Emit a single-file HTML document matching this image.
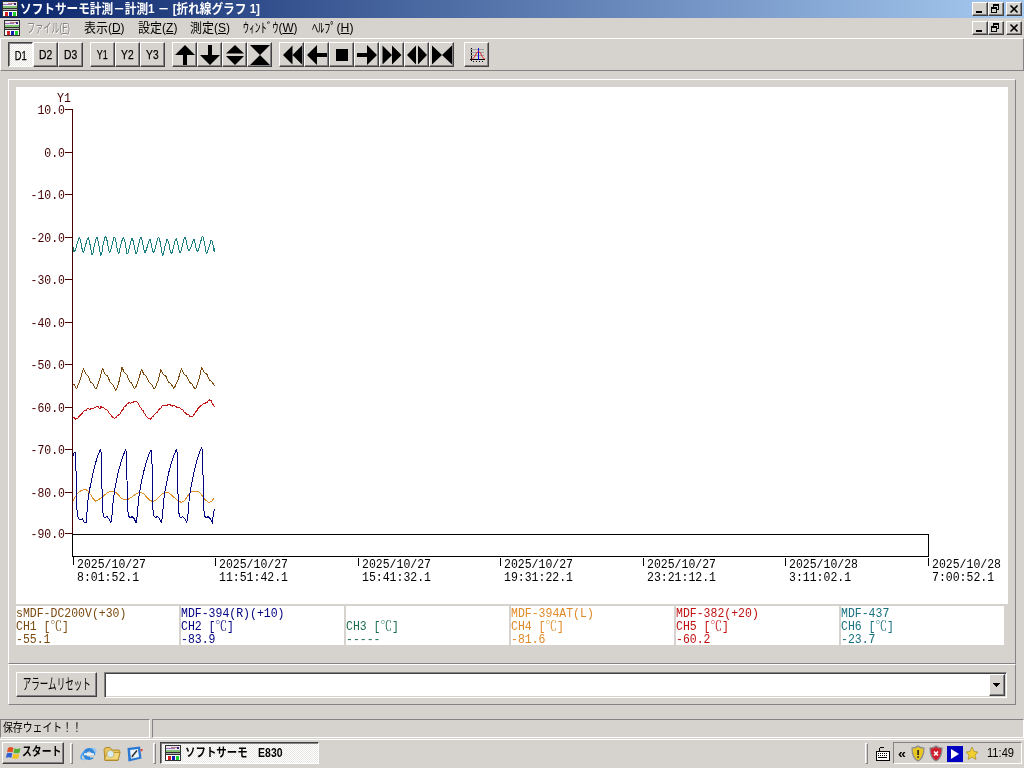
<!DOCTYPE html>
<html lang="ja"><head><meta charset="utf-8"><title>ソフトサーモ計測</title><style>
.f{display:inline-block;white-space:nowrap}

*{box-sizing:border-box;margin:0;padding:0}
html,body{width:1024px;height:768px;overflow:hidden;background:#d6d3ce}
body{position:relative;font-family:"Liberation Sans","Noto Sans CJK JP",sans-serif;font-size:12px;color:#000}
.a{position:absolute}
.title{left:0;top:0;width:1024px;height:18px;background:linear-gradient(to right,#0a246a 0%,#a6caf0 100%)}
.title .t{left:20px;top:0;height:18px;line-height:17px;color:#fff;font-weight:bold;font-size:13px;white-space:nowrap;letter-spacing:0px}
.cb{width:16px;height:14px;background:#d6d3ce;border:1px solid;border-color:#fff #424142 #424142 #fff;box-shadow:inset -1px -1px 0 #848284}
.menu{top:18px;left:0;width:1024px;height:20px}
.mi{top:19px;height:18px;line-height:17px;white-space:nowrap;font-size:13px}
.dis{color:#848284;text-shadow:1px 1px 0 #fff}
.tb{left:0;top:38px;width:1024px;height:33px;border-top:1px solid #fff;border-bottom:1px solid #848284;border-left:1px solid #fff;border-right:1px solid #848284}
.btn{display:flex;justify-content:center;top:42px;width:25px;height:25px;background:#d6d3ce;border:1px solid;border-color:#fff #424142 #424142 #fff;box-shadow:inset -1px -1px 0 #848284;text-align:center;line-height:24px;font-size:12px;-webkit-text-stroke:0.25px #000}
.btn.on{border-color:#424142 #fff #fff #424142;box-shadow:inset 1px 1px 0 #848284;background-color:#e9e7e3;background-image:linear-gradient(45deg,#fff 25%,transparent 25%,transparent 75%,#fff 75%),linear-gradient(45deg,#fff 25%,transparent 25%,transparent 75%,#fff 75%);background-size:2px 2px;background-position:0 0,1px 1px;line-height:26px;padding-left:1px}
.btn svg{position:absolute;left:0;top:0}
.m{position:absolute;transform:scaleY(1.12);transform-origin:0 50%;font-family:"Liberation Mono","Noto Serif CJK SC",monospace;font-size:11.5px;margin-top:-1px;line-height:13px;height:13px;white-space:pre;}
.yl{color:#440000;left:0;width:65px;text-align:right}
.xl{color:#000}
.frame{left:8px;top:79px;width:1008px;height:585px;border:1px solid;border-color:#fff #848284 #848284 #fff}
.plot{left:16px;top:87px;width:992px;height:517px;background:#fff}
.lab{top:606px;height:39px;background:#fff}
.lab .m{left:0px}
.grp{left:8px;top:664px;width:1008px;height:41px;border:1px solid;border-color:#fff #848284 #848284 #fff}
.abtn{display:flex;justify-content:center;left:16px;top:672px;width:81px;height:25px;border:1px solid;border-color:#fff #424142 #424142 #fff;box-shadow:inset -1px -1px 0 #848284;text-align:center;line-height:21px;font-size:15px;white-space:nowrap}
.combo{left:104px;top:672px;width:903px;height:26px;background:#fff;border:1px solid;border-color:#848284 #fff #fff #848284;box-shadow:inset 1px 1px 0 #424142,inset -1px -1px 0 #d6d3ce}
.cbtn{right:1px;top:1px;width:16px;height:22px;background:#d6d3ce;border:1px solid;border-color:#fff #424142 #424142 #fff;box-shadow:inset -1px -1px 0 #848284}
.sp{top:719px;height:19px;border:1px solid;border-color:#848284 #fff #fff #848284;line-height:16px;font-size:12px;white-space:nowrap}
.task{left:0;top:739px;width:1024px;height:29px;border-top:1px solid #fff;background:#d6d3ce}
.start{left:2px;top:742px;width:62px;height:22px;border:1px solid;border-color:#fff #424142 #424142 #fff;box-shadow:inset -1px -1px 0 #848284;font-weight:bold;font-size:12px;line-height:19px;white-space:nowrap}
.tbtn{left:160px;top:742px;width:159px;height:22px;border:1px solid;border-color:#424142 #fff #fff #424142;box-shadow:inset 1px 1px 0 #848284;background-color:#e9e7e3;background-image:linear-gradient(45deg,#fff 25%,transparent 25%,transparent 75%,#fff 75%),linear-gradient(45deg,#fff 25%,transparent 25%,transparent 75%,#fff 75%);background-size:2px 2px;background-position:0 0,1px 1px;font-weight:bold;font-size:12px;line-height:21px;white-space:nowrap}
.sep{width:2px;border-left:1px solid #848284;border-right:1px solid #fff}
.grip{width:3px;border:1px solid;border-color:#fff #848284 #848284 #fff}
.tray{left:893px;top:742px;width:129px;height:22px;border:1px solid;border-color:#848284 #fff #fff #848284}
</style></head><body>
<div class="a title"><div class="a t"><span id="ttl" class="f" style="transform:scaleX(0.8956);transform-origin:0 50%;">ソフトサーモ計測－計測1 － [折れ線グラフ 1]</span></div></div>
<svg class="a" style="left:2px;top:1px" width="16" height="16" viewBox="0 0 16 16" shape-rendering="crispEdges"><rect x="0" y="0" width="16" height="16" fill="#303030"/><rect x="1" y="1" width="14" height="6" fill="#e8e8f0"/><rect x="1" y="3" width="9" height="1" fill="#a070c0"/><rect x="6" y="2" width="6" height="1" fill="#c08080"/><rect x="1" y="5" width="14" height="2" fill="#80c070"/><rect x="12" y="2" width="2" height="2" fill="#402080"/><rect x="1" y="8" width="14" height="1" fill="#b0b0b0"/><rect x="1" y="10" width="14" height="5" fill="#fff"/><rect x="3" y="11" width="3" height="4" fill="#d02020"/><rect x="7" y="11" width="3" height="4" fill="#1020b0"/><rect x="11" y="11" width="3" height="4" fill="#20d030"/></svg><div class="a cb" style="left:972px;top:2px"><svg width="14" height="12" viewBox="0 0 14 12" shape-rendering="crispEdges" style="display:block"><rect x="3" y="8" width="6" height="2" fill="#000"/></svg></div><div class="a cb" style="left:988px;top:2px"><svg width="14" height="12" viewBox="0 0 14 12" shape-rendering="crispEdges" style="display:block"><rect x="4" y="1" width="6" height="2" fill="#000"/><rect x="4" y="1" width="1" height="3" fill="#000"/><rect x="9" y="1" width="1" height="6" fill="#000"/><rect x="8" y="6" width="2" height="1" fill="#000"/><rect x="2" y="4" width="6" height="2" fill="#000"/><rect x="2" y="4" width="1" height="6" fill="#000"/><rect x="7" y="4" width="1" height="6" fill="#000"/><rect x="2" y="9" width="6" height="1" fill="#000"/></svg></div><div class="a cb" style="left:1006px;top:2px"><svg width="14" height="12" viewBox="0 0 14 12" style="display:block"><path d="M3.5 2.5 L10.5 9.5 M10.5 2.5 L3.5 9.5" stroke="#000" stroke-width="1.6" fill="none"/></svg></div><svg class="a" style="left:4px;top:20px" width="16" height="16" viewBox="0 0 16 16" shape-rendering="crispEdges"><rect x="0" y="0" width="16" height="16" fill="#303030"/><rect x="1" y="1" width="14" height="6" fill="#e8e8f0"/><rect x="1" y="3" width="9" height="1" fill="#a070c0"/><rect x="6" y="2" width="6" height="1" fill="#c08080"/><rect x="1" y="5" width="14" height="2" fill="#80c070"/><rect x="12" y="2" width="2" height="2" fill="#402080"/><rect x="1" y="8" width="14" height="1" fill="#b0b0b0"/><rect x="1" y="10" width="14" height="5" fill="#fff"/><rect x="3" y="11" width="3" height="4" fill="#d02020"/><rect x="7" y="11" width="3" height="4" fill="#1020b0"/><rect x="11" y="11" width="3" height="4" fill="#20d030"/></svg><div class="a cb" style="left:972px;top:21px"><svg width="14" height="12" viewBox="0 0 14 12" shape-rendering="crispEdges" style="display:block"><rect x="3" y="8" width="6" height="2" fill="#000"/></svg></div><div class="a cb" style="left:988px;top:21px"><svg width="14" height="12" viewBox="0 0 14 12" shape-rendering="crispEdges" style="display:block"><rect x="4" y="1" width="6" height="2" fill="#000"/><rect x="4" y="1" width="1" height="3" fill="#000"/><rect x="9" y="1" width="1" height="6" fill="#000"/><rect x="8" y="6" width="2" height="1" fill="#000"/><rect x="2" y="4" width="6" height="2" fill="#000"/><rect x="2" y="4" width="1" height="6" fill="#000"/><rect x="7" y="4" width="1" height="6" fill="#000"/><rect x="2" y="9" width="6" height="1" fill="#000"/></svg></div><div class="a cb" style="left:1006px;top:21px"><svg width="14" height="12" viewBox="0 0 14 12" style="display:block"><path d="M3.5 2.5 L10.5 9.5 M10.5 2.5 L3.5 9.5" stroke="#000" stroke-width="1.6" fill="none"/></svg></div><div class="a mi dis" style="left:27px"><span id="m0" class="f" style="transform:scaleX(0.6265);transform-origin:0 50%;">ファイル(<u>F</u>)</span></div><div class="a mi" style="left:83.5px"><span id="m1" class="f" style="transform:scaleX(0.9188);transform-origin:0 50%;">表示(<u>D</u>)</span></div><div class="a mi" style="left:137.5px"><span id="m2" class="f" style="transform:scaleX(0.9263);transform-origin:0 50%;">設定(<u>Z</u>)</span></div><div class="a mi" style="left:190px"><span id="m3" class="f" style="transform:scaleX(0.9225);transform-origin:0 50%;">測定(<u>S</u>)</span></div><div class="a mi" style="left:243px"><span id="m4" class="f" style="transform:scaleX(0.9088);transform-origin:0 50%;">ｳｨﾝﾄﾞｳ(<u>W</u>)</span></div><div class="a mi" style="left:311.5px"><span id="m5" class="f" style="transform:scaleX(0.9415);transform-origin:0 50%;">ﾍﾙﾌﾟ(<u>H</u>)</span></div>
<div class="a tb"></div>
<div class="a btn on" style="left:8px"><span id="b0" class="f" style="transform:scaleX(0.7821);transform-origin:50% 50%;">D1</span></div><div class="a btn" style="left:33px"><span id="b1" class="f" style="transform:scaleX(0.8603);transform-origin:50% 50%;">D2</span></div><div class="a btn" style="left:58px"><span id="b2" class="f" style="transform:scaleX(0.8603);transform-origin:50% 50%;">D3</span></div><div class="a btn" style="left:90px"><span id="b3" class="f" style="transform:scaleX(0.7489);transform-origin:50% 50%;">Y1</span></div><div class="a btn" style="left:115px"><span id="b4" class="f" style="transform:scaleX(0.8511);transform-origin:50% 50%;">Y2</span></div><div class="a btn" style="left:140px"><span id="b5" class="f" style="transform:scaleX(0.8511);transform-origin:50% 50%;">Y3</span></div><div class="a btn" style="left:172px"><svg width="23" height="23" viewBox="0 0 23 23"><path d="M12 2 L22 12 L14 12 L14 22 L10 22 L10 12 L2 12 Z" fill="#000"/></svg></div><div class="a btn" style="left:197px"><svg width="23" height="23" viewBox="0 0 23 23"><path d="M12 22 L22 12 L14 12 L14 2 L10 2 L10 12 L2 12 Z" fill="#000"/></svg></div><div class="a btn" style="left:222px"><svg width="23" height="23" viewBox="0 0 23 23"><path d="M12 2 L21 10.5 L3 10.5 Z M12 22 L21 13 L3 13 Z" fill="#000"/></svg></div><div class="a btn" style="left:247px"><svg width="23" height="23" viewBox="0 0 23 23"><path d="M2 2 L22 2 L12 12 Z M2 22 L22 22 L12 12 Z" fill="#000"/></svg></div><div class="a btn" style="left:279px"><svg width="23" height="23" viewBox="0 0 23 23"><path d="M12.5 2.5 L12.5 21.5 L3 12 Z M22 2.5 L22 21.5 L12.5 12 Z" fill="#000"/></svg></div><div class="a btn" style="left:304px"><svg width="23" height="23" viewBox="0 0 23 23"><path d="M2 12 L12 2 L12 10 L22 10 L22 14 L12 14 L12 22 Z" fill="#000"/></svg></div><div class="a btn" style="left:329px"><svg width="23" height="23" viewBox="0 0 23 23"><rect x="6" y="6" width="12" height="12" fill="#000"/></svg></div><div class="a btn" style="left:354px"><svg width="23" height="23" viewBox="0 0 23 23"><path d="M22 12 L12 2 L12 10 L2 10 L2 14 L12 14 L12 22 Z" fill="#000"/></svg></div><div class="a btn" style="left:379px"><svg width="23" height="23" viewBox="0 0 23 23"><path d="M2.5 2.5 L2.5 21.5 L12 12 Z M12 2.5 L12 21.5 L21.5 12 Z" fill="#000"/></svg></div><div class="a btn" style="left:404px"><svg width="23" height="23" viewBox="0 0 23 23"><path d="M11 2.5 L11 21.5 L2 12 Z M13 2.5 L13 21.5 L22 12 Z" fill="#000"/></svg></div><div class="a btn" style="left:429px"><svg width="23" height="23" viewBox="0 0 23 23"><path d="M2 2.5 L2 21.5 L12 12 Z M22 2.5 L22 21.5 L12 12 Z" fill="#000"/></svg></div><div class="a btn" style="left:464px"><svg width="23" height="23" viewBox="0 0 23 23"><g shape-rendering="crispEdges"><rect x="6" y="5" width="1" height="13" fill="#000"/><rect x="5" y="16" width="15" height="1" fill="#000"/><rect x="5" y="6" width="14" height="1" fill="#a0a0a0"/><rect x="5" y="9" width="14" height="1" fill="#a0a0a0"/><rect x="5" y="12" width="14" height="1" fill="#a0a0a0"/><rect x="13" y="5" width="1" height="12" fill="#0000e0"/></g><path d="M6.5 16 C10 16 11 8.5 13.5 8.5 C16 8.5 17 16 20 16" stroke="#e02020" fill="none" stroke-width="1"/><g fill="#000"><rect x="8" y="18" width="1" height="1"/><rect x="11" y="18" width="1" height="1"/><rect x="14" y="18" width="1" height="1"/><rect x="17" y="18" width="1" height="1"/></g></svg></div>
<div class="a frame"></div><div class="a plot"></div>
<svg class="a" style="left:0;top:0" width="1024" height="768" viewBox="0 0 1024 768"><g stroke="#440000" stroke-width="1" shape-rendering="crispEdges"><line x1="72.5" y1="109" x2="72.5" y2="534"/><line x1="65" y1="109.5" x2="73" y2="109.5"/><line x1="65" y1="152.5" x2="73" y2="152.5"/><line x1="65" y1="194.5" x2="73" y2="194.5"/><line x1="65" y1="237.5" x2="73" y2="237.5"/><line x1="65" y1="279.5" x2="73" y2="279.5"/><line x1="65" y1="322.5" x2="73" y2="322.5"/><line x1="65" y1="364.5" x2="73" y2="364.5"/><line x1="65" y1="407.5" x2="73" y2="407.5"/><line x1="65" y1="449.5" x2="73" y2="449.5"/><line x1="65" y1="492.5" x2="73" y2="492.5"/><line x1="65" y1="533.5" x2="73" y2="533.5"/></g><rect x="72.5" y="534.5" width="856" height="22" fill="#fff" stroke="#000" stroke-width="1" shape-rendering="crispEdges"/><g stroke="#000" stroke-width="1" shape-rendering="crispEdges"><line x1="73.5" y1="557" x2="73.5" y2="565"/><line x1="215.5" y1="558" x2="215.5" y2="566"/><line x1="358.5" y1="558" x2="358.5" y2="566"/><line x1="500.5" y1="558" x2="500.5" y2="566"/><line x1="643.5" y1="558" x2="643.5" y2="566"/><line x1="785.5" y1="558" x2="785.5" y2="566"/><line x1="928.5" y1="558" x2="928.5" y2="566"/></g><g fill="none" stroke-width="1" stroke-linejoin="round" shape-rendering="crispEdges">
<polyline points="73.0,247.0 74.0,251.5 75.5,250.0 78.7,238.0 79.5,237.4 80.9,242.4 81.7,247.4 83.1,252.6 83.9,251.6 85.7,244.6 87.5,238.2 88.3,237.6 89.7,242.6 90.5,247.6 91.9,254.8 92.8,253.8 94.5,244.4 96.3,238.0 97.1,237.4 98.5,242.4 99.3,247.4 100.7,255.6 101.6,254.6 103.3,243.6 105.1,237.2 105.9,236.6 107.3,241.6 108.1,246.6 109.5,252.8 110.4,251.8 112.1,244.2 113.9,237.8 114.7,237.2 116.1,242.2 116.9,247.2 118.3,253.2 119.2,252.2 120.9,244.3 122.8,237.9 123.6,237.3 125.0,242.3 125.8,247.3 127.1,254.0 128.0,253.0 129.8,245.4 131.6,239.0 132.4,238.4 133.8,243.4 134.6,248.4 135.9,254.0 136.8,253.0 138.6,244.4 140.4,238.0 141.2,237.4 142.6,242.4 143.4,247.4 144.7,252.8 145.6,251.8 147.4,246.4 149.2,240.0 150.0,239.4 151.4,244.4 152.2,249.4 153.5,252.6 154.4,251.6 156.2,244.2 158.0,237.8 158.8,237.2 160.2,242.2 161.0,247.2 162.4,255.6 163.2,254.6 165.0,246.2 166.8,239.8 167.6,239.2 169.0,244.2 169.8,249.2 171.2,253.6 172.0,252.6 173.8,245.6 175.6,239.2 176.4,238.6 177.8,243.6 178.6,248.6 180.0,252.8 180.9,251.8 182.6,244.2 184.4,237.8 185.2,237.2 186.6,242.2 187.4,247.2 188.8,250.6 189.7,249.6 191.4,246.4 193.2,240.0 194.0,239.4 195.4,244.4 196.2,249.4 197.6,251.4 198.5,250.4 200.2,243.4 202.0,237.0 202.8,236.4 204.2,241.4 205.0,246.4 206.4,253.8 207.3,252.8 209.0,247.2 210.8,240.8 211.7,240.2 213.1,245.2 213.8,250.2 214.2,248.0 214.8,252.0" stroke="#1c8080"/>
<polyline points="73.0,385.0 74.3,384.5 76.6,389.0 80.2,379.8 83.3,368.6 84.5,371.1 85.7,373.9 88.1,376.0 90.6,382.0 93.0,384.1 95.4,389.0 96.4,388.5 99.7,379.4 102.4,368.3 103.6,370.8 105.0,373.9 107.7,376.3 110.3,382.6 113.0,385.0 115.6,390.2 116.6,389.7 119.6,379.5 122.0,367.4 123.2,369.9 124.5,372.8 127.0,375.0 129.4,381.3 131.9,383.5 134.4,388.5 135.4,388.0 138.7,379.6 141.4,369.1 142.6,371.6 143.9,374.3 146.4,376.3 148.9,382.2 151.4,384.2 153.9,389.0 154.9,388.5 158.2,380.1 160.8,369.6 162.0,372.1 163.3,374.5 165.9,376.2 168.4,382.0 171.0,383.7 173.5,388.2 174.5,387.7 178.2,379.2 181.3,368.8 182.5,371.3 184.0,374.0 186.7,376.1 189.5,382.1 192.2,384.2 194.9,389.0 195.9,388.5 199.1,378.9 201.7,367.4 202.9,369.9 204.3,372.4 206.8,374.1 209.4,379.9 211.9,381.6 214.5,386.2" stroke="#7a4a10"/>
<polyline points="73.3,417.1 74.5,417.9 75.8,419.6 76.9,418.1 78.0,418.1 78.9,416.8 79.8,415.4 80.7,415.0 81.6,413.4 82.6,412.9 83.5,411.4 84.5,410.4 85.5,410.2 86.4,410.1 87.4,408.5 88.3,408.5 89.2,409.0 90.1,409.3 91.0,408.7 92.2,408.3 93.5,408.9 94.5,407.1 95.5,407.9 96.4,406.6 97.4,406.0 98.3,407.0 99.3,408.3 100.2,408.2 101.0,406.6 102.1,407.3 103.2,407.6 104.1,408.1 105.1,409.2 106.0,409.4 107.1,410.1 108.2,411.1 109.1,413.1 110.1,414.1 111.0,415.2 112.0,416.6 113.0,417.3 114.0,418.0 115.0,418.1 116.0,417.4 117.0,416.1 118.0,415.6 119.0,414.5 120.0,414.0 121.0,412.3 122.0,410.2 123.0,409.7 124.1,407.1 125.3,406.1 126.4,405.2 127.3,403.7 128.1,403.6 129.0,402.4 130.2,403.0 131.4,403.0 132.3,402.3 133.1,402.3 134.0,401.0 135.2,401.7 136.4,401.7 137.2,402.4 138.0,402.9 139.0,405.3 140.0,407.2 141.0,408.0 142.0,409.8 143.0,410.4 144.0,412.8 145.0,414.2 146.0,416.2 147.2,417.5 148.5,418.3 149.5,418.6 150.5,419.2 151.8,417.1 153.0,416.4 154.1,414.9 155.3,413.6 156.4,412.4 157.3,412.3 158.2,410.2 159.1,409.3 160.0,408.3 161.0,408.1 162.0,406.0 163.0,405.5 164.0,405.5 165.0,405.7 166.0,405.4 167.0,405.4 168.0,404.6 169.0,404.7 170.2,404.9 171.3,405.9 172.2,406.2 173.1,405.3 174.0,405.5 175.2,406.3 176.3,406.9 177.2,407.5 178.1,407.9 179.0,407.7 180.0,407.8 181.0,408.9 182.0,409.3 183.0,410.1 184.0,411.8 185.0,412.6 186.0,413.5 186.9,414.3 187.9,415.0 188.9,414.7 190.0,416.4 191.0,416.1 191.9,416.2 192.9,416.0 193.9,414.4 195.0,413.4 196.0,411.4 196.9,410.7 197.9,408.4 198.8,407.6 199.6,406.9 200.5,406.0 201.7,405.4 202.9,404.2 203.9,403.6 205.0,403.3 206.0,402.6 207.0,402.4 208.2,400.4 209.5,400.0 210.2,400.4 211.0,400.5 212.0,403.0 213.2,404.8 214.5,407.3" stroke="#c01818"/>
<polyline points="73.0,500.6 75.5,496.5 78.3,492.3 81.5,490.5 85.0,489.0 88.0,491.0 90.5,494.5 93.0,498.5 95.7,501.4 98.0,500.0 101.5,497.8 105.0,494.5 109.8,491.4 114.8,491.6 118.0,494.5 121.0,497.8 123.5,499.4 128.0,499.4 131.0,497.5 134.7,494.8 138.0,493.0 140.6,492.3 144.0,494.0 147.0,497.5 150.0,500.3 153.0,501.7 156.0,499.8 159.7,496.4 162.5,493.8 165.5,492.3 169.0,493.0 173.0,496.4 177.0,500.0 181.3,502.5 184.0,501.0 186.5,497.8 189.0,493.8 191.0,491.8 195.0,491.2 198.0,491.4 201.0,494.0 203.5,497.5 206.0,500.6 208.7,502.2 211.5,501.6 212.7,500.0 213.7,498.4" stroke="#e09028"/>
<polyline points="73.0,456.5 74.2,452.0 75.6,452.4 76.2,480.0 76.9,509.7 78.3,518.8 81.6,519.7 82.5,519.0 84.0,522.0 86.2,522.3 86.8,515.0 87.9,500.6 89.5,490.1 91.2,481.6 93.1,472.5 95.1,464.6 97.1,457.8 99.2,452.2 100.4,449.6 101.3,453.0 101.8,480.0 102.5,509.7 103.6,516.5 105.7,518.0 106.6,516.2 109.0,518.8 110.8,522.5 111.6,519.0 112.3,512.0 113.4,498.3 115.0,488.4 116.6,480.3 118.4,471.6 120.4,464.2 122.4,457.7 124.4,452.4 125.6,449.9 126.5,453.0 127.0,480.0 127.7,509.7 128.8,516.5 130.9,518.0 131.8,516.2 134.2,518.8 136.0,522.5 136.8,519.0 137.5,512.0 138.6,498.3 140.2,488.4 141.8,480.3 143.7,471.6 145.7,464.2 147.7,457.7 149.7,452.4 150.9,449.9 151.8,453.0 152.3,480.0 153.0,509.7 154.1,516.5 156.2,518.0 157.1,516.2 159.5,518.8 161.3,522.5 162.1,519.0 162.8,512.0 163.9,498.3 165.5,488.4 167.1,480.3 169.0,471.6 171.0,464.2 173.1,457.7 175.1,452.4 176.3,449.9 177.2,453.0 177.7,480.0 178.4,509.7 179.5,516.5 181.6,518.0 182.5,516.2 184.9,518.8 186.7,522.5 187.5,519.0 188.2,512.0 189.3,497.8 190.9,487.5 192.5,479.1 194.4,470.0 196.4,462.3 198.5,455.5 200.5,450.0 201.7,447.4 202.6,453.0 203.1,480.0 203.8,509.7 204.9,516.5 207.0,518.0 207.9,516.2 210.3,518.8 212.5,523.3 212.9,518.0 214.0,511.0 214.8,509.4" stroke="#000080"/>
</g></svg>
<div class="m" style="left:57px;top:93px;color:#440000">Y1</div><div class="m yl" style="top:105px">10.0</div><div class="m yl" style="top:148px">0.0</div><div class="m yl" style="top:190px">-10.0</div><div class="m yl" style="top:233px">-20.0</div><div class="m yl" style="top:275px">-30.0</div><div class="m yl" style="top:318px">-40.0</div><div class="m yl" style="top:360px">-50.0</div><div class="m yl" style="top:403px">-60.0</div><div class="m yl" style="top:445px">-70.0</div><div class="m yl" style="top:488px">-80.0</div><div class="m yl" style="top:529px">-90.0</div>
<div class="m xl" style="left:77px;top:559px">2025/10/27</div><div class="m xl" style="left:77px;top:572px">8:01:52.1</div><div class="m xl" style="left:219px;top:559px">2025/10/27</div><div class="m xl" style="left:219px;top:572px">11:51:42.1</div><div class="m xl" style="left:362px;top:559px">2025/10/27</div><div class="m xl" style="left:362px;top:572px">15:41:32.1</div><div class="m xl" style="left:504px;top:559px">2025/10/27</div><div class="m xl" style="left:504px;top:572px">19:31:22.1</div><div class="m xl" style="left:647px;top:559px">2025/10/27</div><div class="m xl" style="left:647px;top:572px">23:21:12.1</div><div class="m xl" style="left:789px;top:559px">2025/10/28</div><div class="m xl" style="left:789px;top:572px">3:11:02.1</div><div class="m xl" style="left:932px;top:559px">2025/10/28</div><div class="m xl" style="left:932px;top:572px">7:00:52.1</div>
<div class="a lab" style="left:16px;width:163px;color:#7a4a10"><div class="m" style="top:2px">sMDF-DC200V(+30)</div><div class="m" style="top:15px">CH1 [℃]</div><div class="m" style="top:28px">-55.1</div></div><div class="a lab" style="left:181px;width:163px;color:#000080"><div class="m" style="top:2px">MDF-394(R)(+10)</div><div class="m" style="top:15px">CH2 [℃]</div><div class="m" style="top:28px">-83.9</div></div><div class="a lab" style="left:346px;width:163px;color:#1a6e4e"><div class="m" style="top:2px"></div><div class="m" style="top:15px">CH3 [℃]</div><div class="m" style="top:28px">-----</div></div><div class="a lab" style="left:511px;width:163px;color:#e08a28"><div class="m" style="top:2px">MDF-394AT(L)</div><div class="m" style="top:15px">CH4 [℃]</div><div class="m" style="top:28px">-81.6</div></div><div class="a lab" style="left:676px;width:163px;color:#c01010"><div class="m" style="top:2px">MDF-382(+20)</div><div class="m" style="top:15px">CH5 [℃]</div><div class="m" style="top:28px">-60.2</div></div><div class="a lab" style="left:841px;width:163px;color:#187080"><div class="m" style="top:2px">MDF-437</div><div class="m" style="top:15px">CH6 [℃]</div><div class="m" style="top:28px">-23.7</div></div>
<div class="a grp"></div><div class="a abtn"><span id="ab" class="f" style="transform:scaleX(0.5687);transform-origin:50% 50%;">アラームリセット</span></div><div class="a combo"><div class="a cbtn"><svg width="14" height="20" viewBox="0 0 14 20" shape-rendering="crispEdges" style="display:block"><path d="M3 8 L10 8 L6.5 12 Z" fill="#000"/></svg></div></div>
<div class="a sp" style="left:0;width:150px;padding-left:2px"><span id="st" class="f" style="transform:scaleX(0.8228);transform-origin:0 50%;">保存ウェイト！！</span></div><div class="a sp" style="left:152px;width:872px"></div>
<div class="a task"></div><div class="a start"><svg class="a" style="left:3px;top:2px" width="17" height="16" viewBox="0 0 17 16"><path d="M2 3 C4 1.5 6 2 7.5 3 L6.5 7.5 C5 6.5 3 6.5 1 7.5 Z" fill="#e05020"/><path d="M8.5 3.3 C10 4.3 12 4.5 14.5 3 L13.5 7.5 C11.5 8.7 9.5 8.5 7.5 7.7 Z" fill="#50b030"/><path d="M0.8 8.5 C3 7.5 5 7.7 6.3 8.5 L5.3 13 C4 12 2 12 0 13 Z" fill="#3060d0"/><path d="M7.3 8.8 C9 9.7 11 9.8 13.3 8.5 L12.3 13 C10.3 14.2 8.3 14 6.3 13.2 Z" fill="#f0c020"/></svg><span class="a" style="left:19px;top:0"><span id="sta" class="f" style="transform:scaleX(0.8226);transform-origin:0 50%;">スタート</span></span></div><div class="a grip" style="left:70px;top:743px;height:21px"></div><svg class="a" style="left:78px;top:744px" width="70" height="20" viewBox="0 0 70 20"><g><ellipse cx="10.5" cy="10" rx="8.2" ry="4" fill="none" stroke="#8cc4f4" stroke-width="1.6" transform="rotate(-32 10.5 10)"/><circle cx="11" cy="10" r="6" fill="#2e86dc"/><circle cx="11" cy="10" r="2.6" fill="#d6d3ce"/><rect x="6" y="9.2" width="10" height="2" fill="#e8f2fc"/><rect x="12" y="11.2" width="6" height="2.4" fill="#d6d3ce"/><path d="M3.5 15.5 C2 13 4 9 7 7" stroke="#4aa0ec" stroke-width="1.4" fill="none"/></g><g><path d="M26 5 L28 3.5 L32 3.5 L34 6 L41 6 L42 8 L40 16.5 L27 16.5 Z" fill="#e9c45a" stroke="#b08a28" stroke-width="1"/><path d="M26.5 16 L29 8.5 L42 8.5 L40 16 Z" fill="#f3d87c" stroke="#b08a28" stroke-width="0.8"/><circle cx="32.5" cy="10" r="3.6" fill="#d6ecf8" stroke="#c8b060" stroke-width="0.8"/></g><g><path d="M49.5 4 L62 2.5 L63.5 14.5 L50.5 17.5 Z" fill="#2878d4"/><path d="M52 6 L60 5 L61 13 L53 14.8 Z" fill="#eaf2fa"/><path d="M54 12.5 L59 6.5" stroke="#303030" stroke-width="1.5"/><path d="M53.5 13.5 L55.5 12.8 L54.2 11.6 Z" fill="#202020"/><rect x="62.5" y="5" width="2" height="2.2" fill="#e04030"/></g></svg><div class="a grip" style="left:153px;top:743px;height:21px"></div><div class="a tbtn"><svg class="a" style="left:4px;top:2px" width="16" height="16" viewBox="0 0 16 16" shape-rendering="crispEdges"><rect x="0" y="0" width="16" height="16" fill="#303030"/><rect x="1" y="1" width="14" height="6" fill="#e8e8f0"/><rect x="1" y="3" width="9" height="1" fill="#a070c0"/><rect x="6" y="2" width="6" height="1" fill="#c08080"/><rect x="1" y="5" width="14" height="2" fill="#80c070"/><rect x="12" y="2" width="2" height="2" fill="#402080"/><rect x="1" y="8" width="14" height="1" fill="#b0b0b0"/><rect x="1" y="10" width="14" height="5" fill="#fff"/><rect x="3" y="11" width="3" height="4" fill="#d02020"/><rect x="7" y="11" width="3" height="4" fill="#1020b0"/><rect x="11" y="11" width="3" height="4" fill="#20d030"/></svg><span class="a" style="left:24px;top:0"><span id="tk" class="f" style="transform:scaleX(0.8703);transform-origin:0 50%;">ソフトサーモ　E830</span></span></div><div class="a grip" style="left:865px;top:743px;height:21px"></div><svg class="a" style="left:875px;top:746px" width="16" height="16" viewBox="0 0 16 16" shape-rendering="crispEdges"><rect x="1" y="5" width="13" height="9" fill="#fff" stroke="#000" stroke-width="1"/><g fill="#000"><rect x="3" y="7" width="1" height="1"/><rect x="5" y="7" width="1" height="1"/><rect x="7" y="7" width="1" height="1"/><rect x="9" y="7" width="1" height="1"/><rect x="11" y="7" width="1" height="1"/><rect x="3" y="9" width="1" height="1"/><rect x="5" y="9" width="1" height="1"/><rect x="7" y="9" width="1" height="1"/><rect x="9" y="9" width="1" height="1"/><rect x="11" y="9" width="1" height="1"/><rect x="3" y="11" width="9" height="1"/><rect x="4" y="2" width="1" height="3"/><rect x="5" y="1" width="4" height="1"/></g></svg><div class="a tray"></div><div class="a" style="left:898px;top:746px;font-weight:bold;font-size:13px;line-height:16px;transform:scaleX(1.1);transform-origin:0 50%">«</div><svg class="a" style="left:910px;top:745px" width="72" height="18" viewBox="0 0 72 18"><path d="M8 1 C10 3 12 3 14 3 C14 10 12 14 8 16 C4 14 2 10 2 3 C4 3 6 3 8 1 Z" fill="#e8c820" stroke="#8a8a90" stroke-width="1.2"/><rect x="7.3" y="5" width="1.6" height="5" fill="#202020"/><rect x="7.3" y="11.2" width="1.6" height="1.6" fill="#202020"/><path d="M26 1 C28 3 30 3 32 3 C32 10 30 14 26 16 C22 14 20 10 20 3 C22 3 24 3 26 1 Z" fill="#d02030" stroke="#8a8a90" stroke-width="1.2"/><path d="M24 6.5 L28 10.5 M28 6.5 L24 10.5" stroke="#fff" stroke-width="1.6"/><rect x="37" y="1" width="16" height="16" fill="#0000c0"/><path d="M41 4 L49 9 L41 14 Z" fill="#fff"/><path d="M60 2 L62 6.5 L66 7 L63 10 L64 14.5 L60 12 L56 14.5 L57 10 L54 7 L58 6.5 Z" fill="#f0d030" stroke="#a08010" stroke-width="0.6" transform="translate(2,0)"/></svg><div class="a" style="left:987px;top:745px;font-size:12px;line-height:16px;"><span id="clk" class="f" style="transform:scaleX(0.9265);transform-origin:0 50%;">11:49</span></div>
</body></html>
